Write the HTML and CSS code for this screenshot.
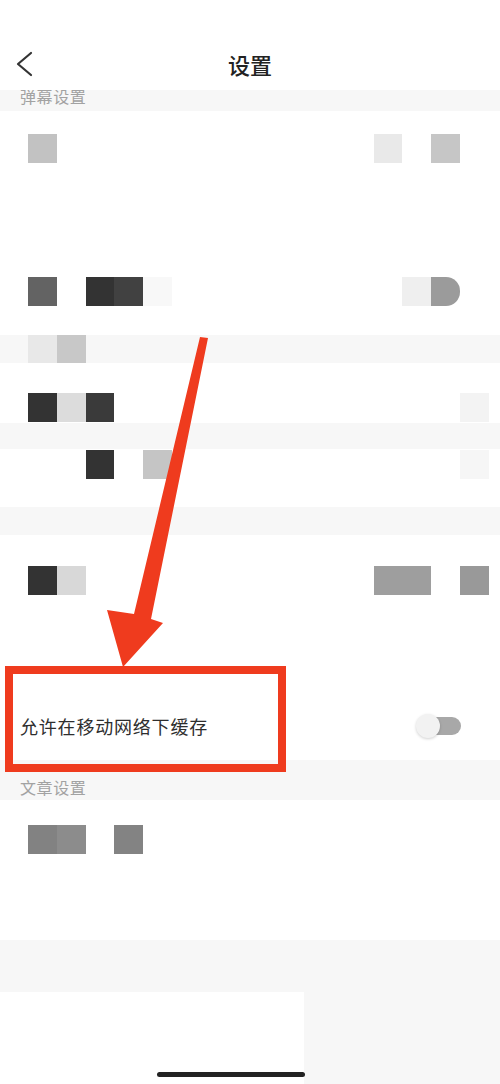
FILE: index.html
```html
<!DOCTYPE html>
<html lang="zh-CN">
<head>
<meta charset="utf-8">
<title>设置</title>
<link rel="stylesheet" href="styles.css">
</head>
<body>
<div class="screen">
  <header class="nav">
    <div class="nav-side">
      <svg class="back" width="20" height="26" viewBox="0 0 20 26" aria-hidden="true">
        <polyline points="16,2 3,13 16,24" fill="none" stroke="#333" stroke-width="2.2" stroke-linecap="round" stroke-linejoin="round"/>
      </svg>
    </div>
    <h1 class="nav-title">设置</h1>
    <div class="nav-side"></div>
  </header>

  <div class="band band-top"><span class="band-label clipped">弹幕设置</span></div>

  <section class="group g-a">
    <div class="mrow mt-23">
      <i class="cell k0 t-c2"></i>
      <i class="cell k12 t-e9"></i>
      <i class="cell k14 t-c6"></i>
    </div>
    <div class="mrow mt-114">
      <i class="cell k0 t-63"></i>
      <i class="cell k2 t-33"></i>
      <i class="cell k3 t-41"></i>
      <i class="cell k4 t-f8"></i>
      <i class="cell k13 t-ef"></i>
      <i class="cell k14 t-9b pill-end"></i>
    </div>
  </section>

  <div class="band band-b2">
    <div class="mrow">
      <i class="cell k0 t-e8 tall28"></i>
      <i class="cell k1 t-c8 tall28"></i>
    </div>
  </div>

  <section class="group g-b">
    <div class="mrow mt-30">
      <i class="cell k0 t-33"></i>
      <i class="cell k1 t-dc"></i>
      <i class="cell k2 t-3a"></i>
      <i class="cell k15 t-f3"></i>
    </div>
  </section>

  <div class="band band-b3"></div>

  <section class="group g-c">
    <div class="mrow mt-1">
      <i class="cell k2 t-33"></i>
      <i class="cell k4 t-c5"></i>
      <i class="cell k15 t-f5"></i>
    </div>
  </section>

  <div class="band band-b4"></div>

  <section class="group g-d">
    <div class="mrow mt-31">
      <i class="cell k0 t-33"></i>
      <i class="cell k1 t-d8"></i>
      <i class="cell k12 span2 t-9e"></i>
      <i class="cell k15 t-99"></i>
    </div>
    <div class="setting-row">
      <span class="setting-label">允许在移动网络下缓存</span>
      <span class="switch"><span class="switch-track"></span><span class="switch-knob"></span></span>
    </div>
  </section>

  <div class="band band-article"><span class="band-label">文章设置</span></div>

  <section class="group g-e">
    <div class="mrow mt-25">
      <i class="cell k0 t-82"></i>
      <i class="cell k1 t-8c"></i>
      <i class="cell k3 t-83"></i>
    </div>
  </section>

  <div class="band band-f"></div>

  <footer class="bottom">
    <div class="bottom-white"></div>
    <div class="bottom-gray"></div>
    <span class="home-bar"></span>
  </footer>

  <div class="mark-box"></div>
  <svg class="mark-arrow" width="500" height="1084" viewBox="0 0 500 1084" aria-hidden="true">
    <polygon points="200,337 208,338 151,619 163,623 123,667 107,610 134,614" fill="#ef3b1e"/>
  </svg>
</div>
</body>
</html>
```

FILE: styles.css
```css
* { box-sizing: border-box; }

html, body {
  margin: 0;
  padding: 0;
  background: #ffffff;
}

body {
  font-family: "Noto Sans CJK SC", "Noto Sans", sans-serif;
  color: #333;
}

.screen {
  position: relative;
  width: 500px;
  height: 1084px;
  overflow: hidden;
  background: #ffffff;
}

/* header */
.nav {
  position: relative;
  z-index: 2;
  height: 90px;
  padding-top: 42px;
  display: grid;
  grid-template-columns: 1fr auto 1fr;
  align-items: start;
  background: #ffffff;
}

.nav-side {
  height: 44px;
  display: flex;
  align-items: center;
  padding-left: 15px;
}

.back { display: block; }

.nav-title {
  margin: 0;
  height: 44px;
  line-height: 44px;
  font-size: 22px;
  font-weight: 500;
  color: #222;
  letter-spacing: 0;
}

/* bands */
.band {
  display: flow-root;
  background: #f7f7f7;
  overflow: hidden;
}

.band-label {
  display: block;
  padding-left: 20px;
  font-size: 16px;
  line-height: 16px;
  letter-spacing: 0.6px;
  color: #a2a2a2;
}

.band-top { height: 21px; }
.band-top .clipped { margin-top: -2px; }

.band-b2 { height: 28px; }
.band-b3 { height: 26px; }
.band-b4 { height: 28px; }
.band-article { height: 40px; padding-top: 19px; }
.band-f { height: 52px; }

/* white groups */
.group {
  display: flow-root;
  background: #ffffff;
}
.g-a { height: 224px; }
.g-b { height: 60px; }
.g-c { height: 58px; }
.g-d { height: 225px; }
.g-e { height: 140px; }

/* mosaic rows */
.mrow {
  display: grid;
  grid-template-columns: repeat(16, 28.8px);
  grid-auto-rows: 29px;
  padding-left: 28px;
}

.mt-1 { margin-top: 1px; }
.mt-23 { margin-top: 23px; }
.mt-25 { margin-top: 25px; }
.mt-30 { margin-top: 30px; }
.mt-31 { margin-top: 31px; }
.mt-114 { margin-top: 114px; }

.cell { display: block; grid-row: 1; }
.tall28 { height: 28px; }

.k0 { grid-column: 1; }
.k1 { grid-column: 2; }
.k2 { grid-column: 3; }
.k3 { grid-column: 4; }
.k4 { grid-column: 5; }
.k12 { grid-column: 13; }
.k13 { grid-column: 14; }
.k14 { grid-column: 15; }
.k15 { grid-column: 16; }
.k12.span2 { grid-column: 13 / span 2; }

.pill-end { border-radius: 0 14px 14px 0; }

.t-33 { background: #333333; }
.t-3a { background: #3a3a3a; }
.t-41 { background: #414141; }
.t-63 { background: #636363; }
.t-82 { background: #828282; }
.t-83 { background: #838383; }
.t-8c { background: #8c8c8c; }
.t-99 { background: #999999; }
.t-9b { background: #9b9b9b; }
.t-9e { background: #9e9e9e; }
.t-c2 { background: #c2c2c2; }
.t-c5 { background: #c5c5c5; }
.t-c6 { background: #c6c6c6; }
.t-c8 { background: #c8c8c8; }
.t-d8 { background: #d8d8d8; }
.t-dc { background: #dcdcdc; }
.t-e8 { background: #e8e8e8; }
.t-e9 { background: #e9e9e9; }
.t-ef { background: #efefef; }
.t-f3 { background: #f3f3f3; }
.t-f5 { background: #f6f6f6; }
.t-f8 { background: #f8f8f8; }

/* setting row */
.setting-row {
  margin-top: 97px;
  height: 68px;
  display: flex;
  align-items: center;
  justify-content: space-between;
  padding: 0 39px 0 20px;
}

.setting-label {
  font-size: 18px;
  line-height: 20px;
  font-weight: 400;
  letter-spacing: 0.8px;
  color: #2e2e2e;
}

.switch {
  position: relative;
  width: 45px;
  height: 24px;
}

.switch-track {
  position: absolute;
  left: 9px;
  top: 3px;
  width: 36px;
  height: 18px;
  border-radius: 9px;
  background: #a8a8a8;
}

.switch-knob {
  position: absolute;
  left: 0;
  top: 0;
  width: 24px;
  height: 24px;
  border-radius: 50%;
  background: #f2f2f2;
  box-shadow: 0 1px 3px rgba(0, 0, 0, 0.18);
}

/* bottom */
.bottom {
  position: relative;
  height: 92px;
  display: flex;
}

.bottom-white { width: 304px; background: #ffffff; }
.bottom-gray { flex: 1; background: #f7f7f7; }

.home-bar {
  position: absolute;
  left: 157px;
  top: 80px;
  width: 148px;
  height: 5px;
  border-radius: 3px;
  background: #222;
}

/* annotations */
.mark-box {
  position: absolute;
  left: 5px;
  top: 666px;
  width: 281px;
  height: 106px;
  border: 8px solid #ef3b1e;
  z-index: 3;
}

.mark-arrow {
  position: absolute;
  left: 0;
  top: 0;
  z-index: 4;
}
```
